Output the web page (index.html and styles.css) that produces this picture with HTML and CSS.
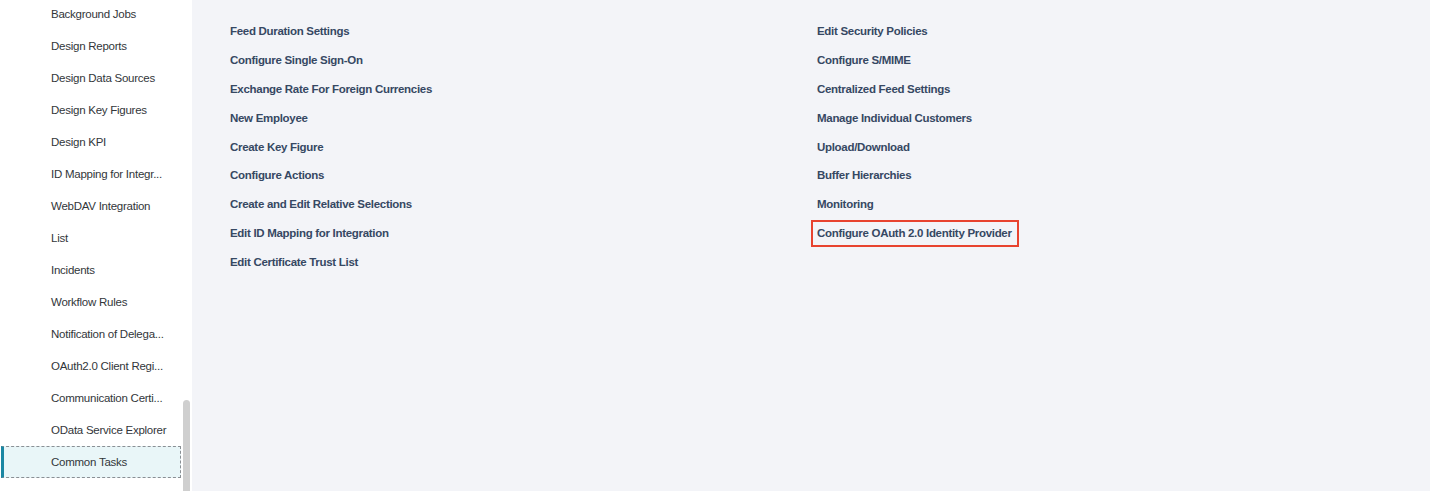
FILE: index.html
```html
<!DOCTYPE html>
<html>
<head>
<meta charset="utf-8">
<link rel="stylesheet" href="styles.css">
</head>
<body>
<div class="app">
  <aside class="sidebar">
    <ul class="nav">
      <li class="nav-item">Background Jobs</li>
      <li class="nav-item">Design Reports</li>
      <li class="nav-item">Design Data Sources</li>
      <li class="nav-item">Design Key Figures</li>
      <li class="nav-item">Design KPI</li>
      <li class="nav-item">ID Mapping for Integr...</li>
      <li class="nav-item">WebDAV Integration</li>
      <li class="nav-item">List</li>
      <li class="nav-item">Incidents</li>
      <li class="nav-item">Workflow Rules</li>
      <li class="nav-item">Notification of Delega...</li>
      <li class="nav-item">OAuth2.0 Client Regi...</li>
      <li class="nav-item">Communication Certi...</li>
      <li class="nav-item">OData Service Explorer</li>
      <li class="nav-item selected">Common Tasks</li>
    </ul>
    <div class="scrollbar"></div>
  </aside>
  <main class="content">
    <div class="columns">
      <ul class="links">
        <li class="link">Feed Duration Settings</li>
        <li class="link">Configure Single Sign-On</li>
        <li class="link">Exchange Rate For Foreign Currencies</li>
        <li class="link">New Employee</li>
        <li class="link">Create Key Figure</li>
        <li class="link">Configure Actions</li>
        <li class="link">Create and Edit Relative Selections</li>
        <li class="link">Edit ID Mapping for Integration</li>
        <li class="link">Edit Certificate Trust List</li>
      </ul>
      <ul class="links">
        <li class="link">Edit Security Policies</li>
        <li class="link">Configure S/MIME</li>
        <li class="link">Centralized Feed Settings</li>
        <li class="link">Manage Individual Customers</li>
        <li class="link">Upload/Download</li>
        <li class="link">Buffer Hierarchies</li>
        <li class="link">Monitoring</li>
        <li class="link"><span class="highlight">Configure OAuth 2.0 Identity Provider</span></li>
      </ul>
    </div>
  </main>
</div>
</body>
</html>
```
FILE: styles.css
```css
* { box-sizing: border-box; }
html, body {
  margin: 0;
  padding: 0;
  height: 100%;
  overflow: hidden;
}
body {
  font-family: "Liberation Sans", Arial, sans-serif;
  background: #f3f4f8;
}
.app {
  display: flex;
  height: 491px;
}
.sidebar {
  width: 192px;
  flex: none;
  background: #ffffff;
  position: relative;
  overflow: hidden;
}
.nav {
  list-style: none;
  margin: -2px 0 0 0;
  padding: 0;
}
.nav-item {
  height: 32px;
  line-height: 32px;
  padding-left: 51px;
  font-size: 11.5px;
  letter-spacing: -0.25px;
  color: #32363a;
  white-space: nowrap;
  margin-right: 11px;
}
.nav-item.selected {
  background: #e9f6f8;
  border: 1px dashed #8a8f94;
  border-left: 3px solid #1b87a3;
  margin-left: 1px;
  padding-left: 47px;
  line-height: 30px;
}
.scrollbar {
  position: absolute;
  left: 183px;
  top: 400px;
  width: 7px;
  height: 100px;
  background: #cfcfcf;
  border-radius: 4px 4px 0 0;
}
.content {
  flex: 1;
  padding: 17px 0 0 38px;
}
.columns {
  display: grid;
  grid-template-columns: 587px 587px;
}
.links {
  list-style: none;
  margin: 0;
  padding: 0;
}
.link {
  height: 28.9px;
  line-height: 29px;
  font-size: 11.5px;
  letter-spacing: -0.3px;
  font-weight: bold;
  color: #364863;
  white-space: nowrap;
}
.highlight {
  display: inline-block;
  border: 2px solid #e8432f;
  padding: 0 5px 0 4px;
  margin-left: -6px;
  line-height: 23px;
}
```
